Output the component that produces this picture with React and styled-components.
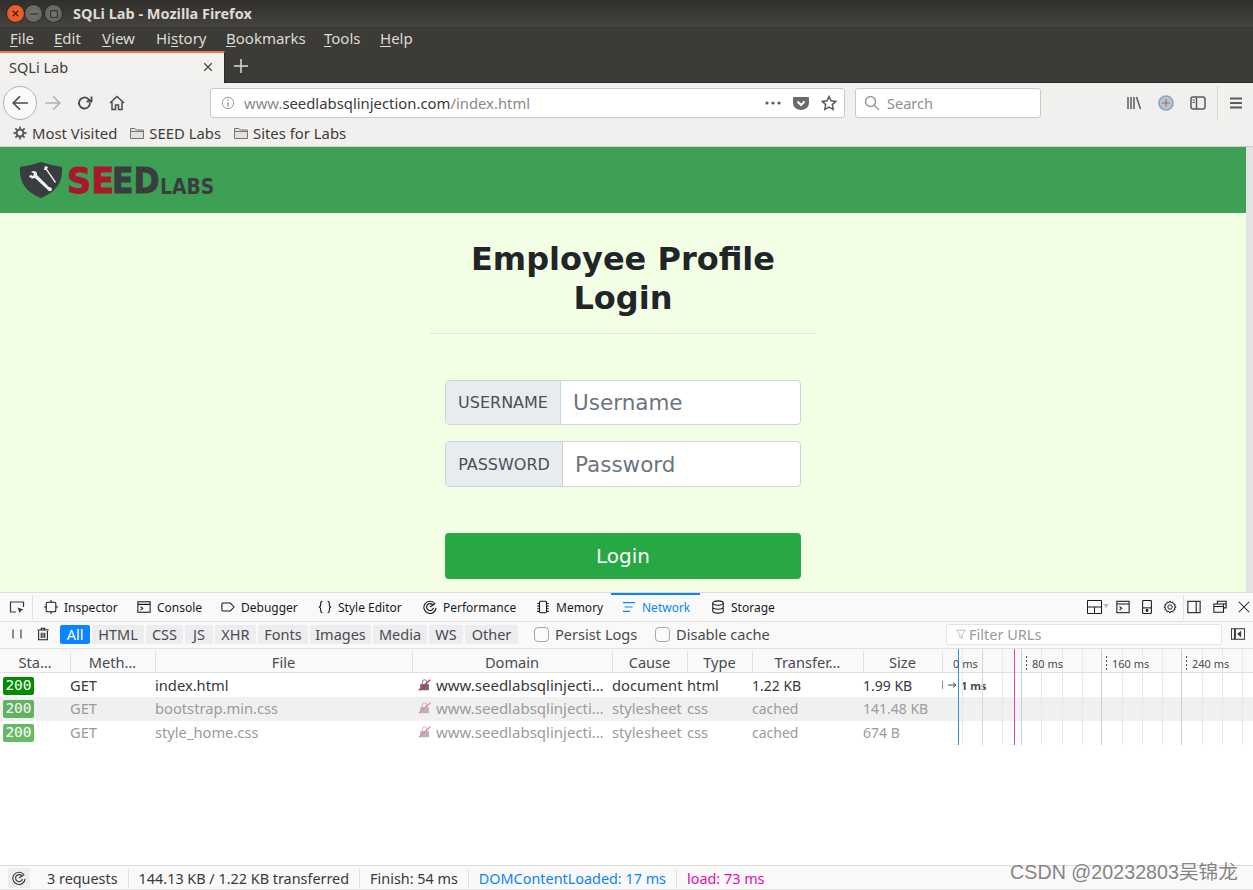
import React from 'react'
import styled, { createGlobalStyle } from 'styled-components'

const UI_FONT = '"Noto Sans", "Open Sans", sans-serif'

const GlobalStyle = createGlobalStyle`
  html, body { margin: 0; padding: 0; height: 100%; }
  body { width: 1253px; height: 890px; overflow: hidden; background: #fff; font-family: ${UI_FONT}; }
  * { box-sizing: border-box; }
`

const Window = styled.div`
  width: 1253px;
  height: 890px;
  display: flex;
  flex-direction: column;
  position: relative;
  overflow: hidden;
`

const TitleBar = styled.div`
  height: 27px;
  flex: none;
  display: flex;
  align-items: center;
  padding-left: 7px;
  background: linear-gradient(#2f2e2a, #45443f);
`
const WinDot = styled.span`
  width: 17px;
  height: 17px;
  border-radius: 50%;
  margin-right: ${(p) => p.$mr}px;
  display: flex;
  align-items: center;
  justify-content: center;
  color: ${(p) => (p.$close ? '#4a1d0d' : '#34332f')};
  background: ${(p) => (p.$close ? 'radial-gradient(#f0693a, #e5501f)' : 'radial-gradient(#77756f, #5f5d58)')};
  box-shadow: 0 0 0 1px rgba(0, 0, 0, 0.25);
`
const WinTitle = styled.div`
  margin: 0 0 1px 11px;
  font-size: 14.5px;
  font-weight: 700;
  color: #dfdbd2;
`

const MenuBar = styled.div`
  height: 24px;
  flex: none;
  display: flex;
  align-items: center;
  padding: 0 0 2px 10px;
  background: #3c3b37;
  color: #dfdbd2;
  font-size: 15px;
  u { text-underline-offset: 2px; }
`
const MenuItem = styled.span`
  width: ${(p) => p.$w}px;
  flex: none;
`

const TabStrip = styled.div`
  height: 32px;
  flex: none;
  display: flex;
  align-items: stretch;
  background: #3c3b37;
  border-bottom: 1px solid #2a2a27;
`
const ActiveTab = styled.div`
  width: 225px;
  display: flex;
  align-items: center;
  justify-content: space-between;
  padding: 0 10px 3px 9px;
  background: #f2f1ef;
  border-top: 2px solid #e8794c;
  border-right: 1px solid #2a2a27;
  margin-bottom: -1px;
  color: #3d3c38;
  font-size: 14.5px;
`
const NewTab = styled.div`
  width: 32px;
  padding-bottom: 2px;
  display: flex;
  align-items: center;
  justify-content: center;
  color: #dcdad5;
`

const NavBar = styled.div`
  height: 38px;
  flex: none;
  display: flex;
  align-items: center;
  padding: 1px 0 0 3px;
  background: #f2f0ee;
`
const BackButton = styled.div`
  width: 34px;
  height: 34px;
  flex: none;
  border-radius: 50%;
  border: 1px solid #b3b1ae;
  background: #fbfafa;
  display: flex;
  align-items: center;
  justify-content: center;
  color: #4a4a48;
`
const NavIcon = styled.div`
  width: 32px;
  flex: none;
  display: flex;
  justify-content: center;
  color: ${(p) => p.$color || '#4a4a48'};
`
const UrlBar = styled.div`
  width: 635px;
  height: 30px;
  margin-left: 77px;
  flex: none;
  display: flex;
  align-items: center;
  padding: 0 7px 0 10px;
  background: #fff;
  border: 1px solid #cbc9c6;
  border-radius: 3px;
  font-size: 14.85px;
  color: #8a8a88;
`
const UrlText = styled.div`
  flex: 1;
  margin-left: 9px;
  b { font-weight: 400; color: #3a3a38; }
`
const UrlActions = styled.div`
  display: flex;
  align-items: center;
  gap: 12px;
  color: #5c5c5a;
`
const SearchBox = styled.div`
  width: 186px;
  height: 30px;
  margin-left: 10px;
  flex: none;
  display: flex;
  align-items: center;
  gap: 7px;
  padding-left: 8px;
  background: #fff;
  border: 1px solid #cbc9c6;
  border-radius: 3px;
  font-size: 14.5px;
  color: #8f8f8d;
`
const SearchGlyph = styled.span`
  color: #9a9a98;
`
const NavRight = styled.div`
  margin-left: 77px;
  display: flex;
  align-items: center;
  color: #5a5a58;
`
const NavSlot = styled.div`
  width: 32px;
  display: flex;
  justify-content: center;
`
const NavDivider = styled.div`
  width: 1px;
  height: 34px;
  margin: 0 10px 0 3px;
  background: #dad8d5;
`

const BookmarksBar = styled.div`
  height: 26px;
  flex: none;
  display: flex;
  align-items: center;
  padding: 0 0 1px 13px;
  background: #f2f0ee;
  border-bottom: 1px solid #cfcdca;
  color: #3d3c38;
  font-size: 14.85px;
`
const Bookmark = styled.div`
  display: flex;
  align-items: center;
  gap: ${(p) => p.$gap || 4}px;
  margin-right: 12px;
`
const GearGlyph = styled.span`
  color: #5a5a58;
`

const Viewport = styled.div`
  height: 445px;
  flex: none;
  display: flex;
  background: #f3ffe4;
  overflow: hidden;
`
const Page = styled.main`
  flex: 1;
  display: flex;
  flex-direction: column;
  align-items: center;
  font-family: "DejaVu Sans", sans-serif;
`
const Scrollbar = styled.div`
  width: 7px;
  flex: none;
  background: #e3e3e3;
`
const Banner = styled.div`
  width: 100%;
  height: 66px;
  flex: none;
  display: flex;
  align-items: center;
  padding-left: 19px;
  background: #3ea055;
`
const LoginCard = styled.form`
  width: 386px;
  display: flex;
  flex-direction: column;
  align-items: center;
  padding-top: 27px;
`
const Heading = styled.h2`
  margin: 0;
  font-size: 32px;
  line-height: 39px;
  font-weight: 700;
  text-align: center;
  color: #212529;
`
const Rule = styled.hr`
  width: 100%;
  margin: 15px 0 46px;
  border: 0;
  border-top: 1px solid #dfe5d8;
`
const InputGroup = styled.div`
  width: 356px;
  height: ${(p) => p.$h}px;
  margin-bottom: ${(p) => p.$mb}px;
  display: flex;
  border: 1px solid #ced4da;
  border-radius: 4px;
  overflow: hidden;
  background: #fff;
`
const Addon = styled.span`
  width: ${(p) => p.$w}px;
  flex: none;
  display: flex;
  align-items: center;
  justify-content: center;
  background: #e9ecef;
  border-right: 1px solid #ced4da;
  color: #495057;
  font-size: 16px;
`
const Field = styled.div`
  flex: 1;
  display: flex;
  align-items: center;
  padding-left: 12px;
  color: #6c757d;
  font-size: 21.5px;
`
const LoginButton = styled.button`
  width: 356px;
  height: 46px;
  border: 0;
  border-radius: 4px;
  background: #28a745;
  color: #fff;
  font-family: inherit;
  font-size: 20px;
`

const DevTools = styled.section`
  flex: 1;
  min-height: 0;
  display: flex;
  flex-direction: column;
  position: relative;
  background: #fff;
  color: #38383d;
  font-size: 14px;
`
const ToolTabs = styled.div`
  height: 30px;
  flex: none;
  display: flex;
  align-items: stretch;
  background: #f9f9fa;
  border-top: 1px solid #dcdcdc;
  border-bottom: 1px solid #e0e0e1;
`
const PickerSlot = styled.div`
  width: 33px;
  flex: none;
  margin: 2px 0;
  display: flex;
  align-items: center;
  justify-content: center;
  padding-left: 1px;
  border-right: 1px solid #e0e0e1;
`
const ToolTab = styled.div`
  width: ${(p) => p.$w}px;
  flex: none;
  display: flex;
  align-items: center;
  gap: 6px;
  padding-left: ${(p) => p.$pl || 10}px;
  font-size: 12px;
  color: ${(p) => (p.$active ? '#0a84ff' : '#18191a')};
  box-shadow: ${(p) => (p.$active ? 'inset 0 2px 0 #0a84ff' : 'none')};
`
const ToolActions = styled.div`
  margin-left: auto;
  display: flex;
  align-items: center;
  color: #18191a;
`
const ToolAction = styled.div`
  width: ${(p) => p.$w}px;
  display: flex;
  justify-content: center;
`
const ToolDivider = styled.div`
  width: 1px;
  height: 24px;
  margin-right: -1px;
  background: #e0e0e1;
`

const FilterRow = styled.div`
  height: 27px;
  flex: none;
  display: flex;
  align-items: center;
  padding-bottom: 2px;
  background: #f9f9fa;
  border-bottom: 1px solid #e0e0e1;
`
const FilterIcons = styled.div`
  width: 60px;
  flex: none;
  display: flex;
  align-items: center;
  color: #18191a;
`
const FilterIcon = styled.div`
  width: ${(p) => p.$w}px;
  display: flex;
  justify-content: center;
`
const FilterChips = styled.div`
  display: flex;
  gap: 2px;
  margin-right: 16px;
`
const Chip = styled.div`
  width: ${(p) => p.$w}px;
  height: 19px;
  display: flex;
  align-items: center;
  justify-content: center;
  border-radius: 2px;
  font-size: 14.5px;
  background: ${(p) => (p.$on ? '#0a84ff' : '#ededf0')};
  color: ${(p) => (p.$on ? '#fff' : '#4a4a4f')};
`
const CheckLabel = styled.label`
  width: ${(p) => p.$w}px;
  flex: none;
  display: flex;
  align-items: center;
  gap: 6px;
  font-size: 14.6px;
  color: #4a4a4f;
`
const CheckBox = styled.span`
  width: 15px;
  height: 15px;
  flex: none;
  border: 1px solid #a8a8a8;
  border-radius: 4px;
  background: #fbfbfb;
`
const FilterInput = styled.div`
  width: 276px;
  height: 21px;
  margin-left: 150px;
  flex: none;
  display: flex;
  align-items: center;
  gap: 3px;
  padding-left: 9px;
  background: #fff;
  border: 1px solid #e3e3e4;
  border-radius: 2px;
  font-size: 14.5px;
  color: #9a9a9e;
`
const ToggleSlot = styled.div`
  flex: 1;
  display: flex;
  justify-content: center;
  color: #38383d;
`

const Table = styled.div`
  position: relative;
  flex: 1;
  min-height: 0;
`
const columns = '70px 85px 257px 200px 75px 65px 111px 79px 1fr'
const HeaderRow = styled.div`
  height: 24px;
  display: grid;
  grid-template-columns: ${columns};
  background: #f9f9fa;
  border-bottom: 1px solid #e0e0e1;
`
const HeaderCell = styled.div`
  display: flex;
  align-items: center;
  justify-content: center;
  margin: 3px -1px 2px 0;
  padding: 0 6px;
  font-size: 14.6px;
  color: #4a4a4f;
  white-space: nowrap;
  border-right: ${(p) => (p.$last ? '0' : '1px solid #e0e0e1')};
`
const Row = styled.div`
  height: 24px;
  display: grid;
  grid-template-columns: ${columns};
  align-items: center;
  padding-bottom: ${(p) => (p.$lift ? 2 : 0)}px;
  background: ${(p) => (p.$alt ? '#f0f0f0' : 'transparent')};
  color: ${(p) => (p.$cached ? '#9b9b9b' : '#38383d')};
  font-size: 14.7px;
  white-space: nowrap;
`
const StatusCell = styled.div`
  padding: ${(p) => (p.$lift ? '2px 0 0 3px' : '1px 0 0 3px')};
`
const StatusBadge = styled.span`
  display: block;
  width: 31px;
  height: 18px;
  border-radius: 2px;
  text-align: center;
  font-family: "DejaVu Sans Mono", monospace;
  font-size: 14.5px;
  line-height: 17px;
  color: #fff;
  background: #058b00;
  opacity: ${(p) => (p.$cached ? 0.6 : 1)};
`
const DomainCell = styled.div`
  display: flex;
  align-items: center;
  gap: 4px;
  padding-left: 6px;
  font-size: 15px;
  color: ${(p) => (p.$cached ? '#9b9b9b' : '#38383d')};
`
const NumberCell = styled.div`
  font-size: 14px;
`
const Timing = styled.div`
  display: flex;
  align-items: center;
  gap: 4px;
  font-size: 11px;
  font-weight: 700;
  color: #4a4a4f;
`
const WaterfallSvg = styled.svg`
  position: absolute;
  left: 942px;
  top: 0;
  pointer-events: none;
`
const TickRow = styled.div`
  position: absolute;
  left: 942px;
  top: 2px;
  height: 24px;
  display: flex;
  align-items: center;
  font-size: 11px;
  color: #4a4a4f;
`
const Tick = styled.span`
  width: ${(p) => p.$w}px;
  padding-left: ${(p) => p.$pl}px;
`

const StatusBar = styled.footer`
  height: 25px;
  flex: none;
  display: flex;
  align-items: center;
  padding: 1px 0 0 8px;
  background: #f9f9fa;
  border-top: 1px solid #dcdcdc;
  border-bottom: 1px solid #e6e6e6;
  font-size: 14.4px;
  color: #38383d;
`
const PerfButton = styled.div`
  width: 22px;
  height: 20px;
  margin-right: 17px;
  display: flex;
  align-items: center;
  justify-content: center;
  border-radius: 2px;
  background: #ededf0;
`
const StatusItem = styled.div`
  padding-right: 10px;
  margin-right: 10px;
  border-right: ${(p) => (p.$last ? '0' : '1px solid #e0e0e1')};
  color: ${(p) => p.$color || 'inherit'};
`
const Watermark = styled.div`
  position: absolute;
  right: 15px;
  bottom: 5px;
  font-family: "Liberation Sans", "Noto Sans CJK SC", sans-serif;
  font-size: 19.7px;
  color: #858585;
  text-shadow: 1px 1px 1px rgba(255, 255, 255, 0.9);
`

const Icon = ({ size = 16, children, sw = 1.5 }) => (
  <svg width={size} height={size} viewBox="0 0 16 16" fill="none" stroke="currentColor" strokeWidth={sw} style={{ display: 'block', flex: 'none' }}>
    {children}
  </svg>
)

const Folder = () => (
  <Icon size={16} sw={1}>
    <path d="M1.5 13.5V3.5h4.5l1.5 1.5h7v8.5z" fill="#e3e1dc" stroke="#77756f" />
    <path d="M1.5 6.5h13" stroke="#77756f" />
  </Icon>
)

const LockOff = ({ cached }) => (
  <Icon size={14} sw={1}>
    <path d="M2.5 7h10v7h-10z" fill={cached ? '#b5b5b5' : '#6b6b6b'} stroke="none" />
    <path d="M5 7V4.5a2.5 2.5 0 0 1 5 0V7" stroke={cached ? '#b5b5b5' : '#6b6b6b'} />
    <path d="M1 14L14 2" stroke={cached ? '#ee8a9c' : '#e22850'} strokeWidth="1.6" />
  </Icon>
)

const PerfGlyph = () => (
  <Icon size={14} sw={1.3}>
    <path d="M13.5 4A7 7 0 1 0 15 9" />
    <path d="M11.5 6A4 4 0 1 0 12 9" />
    <path d="M8 8l6-4" />
  </Icon>
)

const rows = [
  { file: 'index.html', cause: 'document', type: 'html', transfer: '1.22 KB', size: '1.99 KB' },
  { file: 'bootstrap.min.css', cause: 'stylesheet', type: 'css', transfer: 'cached', size: '141.48 KB', cached: true, alt: true, lift: true },
  { file: 'style_home.css', cause: 'stylesheet', type: 'css', transfer: 'cached', size: '674 B', cached: true, lift: true },
]

const lightLines = [20, 60, 99, 120, 140, 180, 200, 220, 260, 280, 300]
const midLines = [40]
const darkLines = [79, 159, 239]

const Waterfall = () => (
  <WaterfallSvg width="311" height="96">
    {lightLines.map((x) => <line key={x} x1={x + 0.5} x2={x + 0.5} y1="0" y2="96" stroke="#e8e8e8" />)}
    {midLines.map((x) => <line key={x} x1={x + 0.5} x2={x + 0.5} y1="0" y2="96" stroke="#d8d8d8" />)}
    {darkLines.map((x) => <line key={x} x1={x + 0.5} x2={x + 0.5} y1="0" y2="96" stroke="#cdcdcd" />)}
    <line x1="16.5" x2="16.5" y1="0" y2="96" stroke="#2f8df5" />
    <line x1="72.5" x2="72.5" y1="0" y2="96" stroke="#e23cc0" />
    {[84, 164, 244].map((x) => <line key={x} x1={x + 0.5} x2={x + 0.5} y1="7" y2="22" stroke="#555" strokeDasharray="2 2" />)}
  </WaterfallSvg>
)

const logoFont = '"DejaVu Sans", sans-serif'

const Logo = () => (
  <svg width="200" height="60" viewBox="0 -11 200 60" style={{ display: 'block' }}>
    <path d="M1 6C8 5 15 3 22 1c7 2 14 4 21 5 1 14-5 25-21 31C6 31 0 20 1 6z" fill="#3a3d3f" />
    <path d="M26 5l3 1-1 2 9 13-1 1-9-13-2 0z" fill="#f2f2f2" />
    <path d="M12 11c2-2 5-1 6 1l0 2 12 12c2 0 3 1 3 3-1 1-3 2-4 0L16 17c-3 1-5 0-6-2l2-1 2 1 1-2-1-1z" fill="#f2f2f2" />
    <text transform="translate(48 32) scale(1.12 1.2)" fontFamily={logoFont} fontWeight="700" fontSize="30" fill="#a8172c" stroke="#a8172c" strokeWidth="0.8">SE</text>
    <text transform="translate(93 32) scale(1.05 1.2)" fontFamily={logoFont} fontWeight="700" fontSize="30" fill="#3a3d3f" stroke="#3a3d3f" strokeWidth="0.8">ED</text>
    <text transform="translate(141 33) scale(1.04 1.17)" fontFamily={logoFont} fontWeight="700" fontSize="18" fill="#3a3d3f">LABS</text>
  </svg>
)

const menuItems = [
  { w: 44, before: '', key: 'F', after: 'ile' },
  { w: 48, before: '', key: 'E', after: 'dit' },
  { w: 54, before: '', key: 'V', after: 'iew' },
  { w: 70, before: 'Hi', key: 's', after: 'tory' },
  { w: 98, before: '', key: 'B', after: 'ookmarks' },
  { w: 56, before: '', key: 'T', after: 'ools' },
  { w: 50, before: '', key: 'H', after: 'elp' },
]

const chips = [['All', 30], ['HTML', 52], ['CSS', 37], ['JS', 28], ['XHR', 41], ['Fonts', 50], ['Images', 61], ['Media', 54], ['WS', 34], ['Other', 53]]

export default function App() {
  return (
    <Window>
      <GlobalStyle />
      <TitleBar>
        <WinDot $close $mr={1}>
          <Icon size={9} sw={2.4}><path d="M3 3l10 10M13 3L3 13" /></Icon>
        </WinDot>
        <WinDot $mr={3}>
          <Icon size={10} sw={2.2}><path d="M2 8h12" /></Icon>
        </WinDot>
        <WinDot $mr={0}>
          <Icon size={10} sw={1.8}><rect x="2.5" y="2.5" width="11" height="11" rx="1.5" /></Icon>
        </WinDot>
        <WinTitle>SQLi Lab - Mozilla Firefox</WinTitle>
      </TitleBar>
      <MenuBar>
        {menuItems.map((m) => (
          <MenuItem key={m.after} $w={m.w}>{m.before}<u>{m.key}</u>{m.after}</MenuItem>
        ))}
      </MenuBar>
      <TabStrip>
        <ActiveTab>
          SQLi Lab
          <Icon size={12}><path d="M3 3l10 10M13 3L3 13" /></Icon>
        </ActiveTab>
        <NewTab>
          <Icon size={16}><path d="M8 1v14M1 8h14" /></Icon>
        </NewTab>
      </TabStrip>
      <NavBar>
        <BackButton>
          <Icon size={18}><path d="M15 8H2M8 2L2 8l6 6" /></Icon>
        </BackButton>
        <NavIcon $color="#b5b4b2">
          <Icon size={18}><path d="M1 8h13M8 2l6 6-6 6" /></Icon>
        </NavIcon>
        <NavIcon>
          <Icon size={16} sw={1.8}><path d="M13 8a5.5 5.5 0 1 1-1.6-3.9L14 6.5M14.5 1.5v5h-5" /></Icon>
        </NavIcon>
        <NavIcon>
          <Icon size={16} sw={1.5}><path d="M1 8l7-6.5L15 8M3 7v7.5h3.5V10h3v4.5H13V7" /></Icon>
        </NavIcon>
        <UrlBar>
          <Icon size={14} sw={1}>
            <circle cx="8" cy="8" r="6.5" />
            <path d="M8 7v5M8 4v1.5" strokeWidth="1.5" />
          </Icon>
          <UrlText>www.<b>seedlabsqlinjection.com</b>/index.html</UrlText>
          <UrlActions>
            <svg width="16" height="4" viewBox="0 0 16 4" style={{ display: 'block' }}>
              <circle cx="2" cy="2" r="1.6" fill="currentColor" />
              <circle cx="8" cy="2" r="1.6" fill="currentColor" />
              <circle cx="14" cy="2" r="1.6" fill="currentColor" />
            </svg>
            <svg width="16" height="16" viewBox="0 0 16 16" style={{ display: 'block' }}>
              <path d="M1 2h14a1 1 0 0 1 1 1v5a8 7 0 0 1-16 0V3a1 1 0 0 1 1-1z" fill="#6a6a68" />
              <path d="M4.5 6.5L8 10l3.5-3.5" stroke="#fff" strokeWidth="2" fill="none" />
            </svg>
            <Icon size={16}><path d="M8 1.5l2 4.3 4.7.6-3.4 3.2.9 4.7L8 12l-4.2 2.3.9-4.7L1.3 6.4l4.7-.6z" /></Icon>
          </UrlActions>
        </UrlBar>
        <SearchBox>
          <SearchGlyph>
            <Icon size={16}><circle cx="6.5" cy="6.5" r="5" /><path d="M10 10l5 5" /></Icon>
          </SearchGlyph>
          Search
        </SearchBox>
        <NavRight>
          <NavSlot>
            <Icon size={16}><path d="M2 2v12M5 2v12M8 2v12M10.5 2l4 12" /></Icon>
          </NavSlot>
          <NavSlot>
            <svg width="16" height="16" viewBox="0 0 16 16" style={{ display: 'block' }}>
              <circle cx="8" cy="8" r="7" fill="#c4c2bf" stroke="#7ba3e0" strokeWidth="1.6" />
              <path d="M8 4v8M4 8h8" stroke="#777" />
            </svg>
          </NavSlot>
          <NavSlot>
            <Icon size={16}>
              <rect x="1" y="2" width="14" height="12" rx="2" />
              <path d="M6.5 2v12" />
              <path d="M2.5 5h2.5M2.5 7.5h2.5" strokeWidth="1" />
            </Icon>
          </NavSlot>
          <NavDivider />
          <Icon size={16} sw={2}><path d="M2 3.5h12M2 8h12M2 12.5h12" /></Icon>
        </NavRight>
      </NavBar>
      <BookmarksBar>
        <Bookmark $gap={5}>
          <GearGlyph>
            <Icon size={14} sw={2.5}>
              <circle cx="8" cy="8" r="4" />
              <path d="M8 0.5v3M8 12.5v3M0.5 8h3M12.5 8h3M2.7 2.7l2.1 2.1M11.2 11.2l2.1 2.1M2.7 13.3l2.1-2.1M11.2 4.8l2.1-2.1" strokeWidth="2" />
            </Icon>
          </GearGlyph>
          Most Visited
        </Bookmark>
        <Bookmark><Folder />SEED Labs</Bookmark>
        <Bookmark><Folder />Sites for Labs</Bookmark>
      </BookmarksBar>

      <Viewport>
        <Page>
          <Banner><Logo /></Banner>
          <LoginCard>
            <Heading>Employee Profile<br />Login</Heading>
            <Rule />
            <InputGroup $h={45} $mb={16}>
              <Addon $w={115}>USERNAME</Addon>
              <Field>Username</Field>
            </InputGroup>
            <InputGroup $h={46} $mb={46}>
              <Addon $w={117}>PASSWORD</Addon>
              <Field>Password</Field>
            </InputGroup>
            <LoginButton type="button">Login</LoginButton>
          </LoginCard>
        </Page>
        <Scrollbar />
      </Viewport>

      <DevTools>
        <ToolTabs>
          <PickerSlot>
            <Icon size={16} sw={1.2}>
              <path d="M7 13H1.5V3h13v5" />
              <path d="M8.5 8.5l6 2-2.5 1.2-1.2 2.5z" fill="currentColor" stroke="none" />
            </Icon>
          </PickerSlot>
          <ToolTab $w={94} $pl={11}>
            <Icon size={14} sw={1.2}><rect x="2.5" y="2.5" width="11" height="11" rx="1.5" /><path d="M8 0v2.5M8 13.5V16M0 8h2.5M13.5 8H16" /></Icon>
            Inspector
          </ToolTab>
          <ToolTab $w={84}>
            <Icon size={14} sw={1.2}><rect x="1" y="2" width="14" height="12" /><path d="M1 5h14M4 7.5l2.5 2L4 11.5" /></Icon>
            Console
          </ToolTab>
          <ToolTab $w={97}>
            <Icon size={14} sw={1.2}><path d="M2 3.5h8.5L15 8l-4.5 4.5H2a1 1 0 0 1-1-1v-7a1 1 0 0 1 1-1z" /></Icon>
            Debugger
          </ToolTab>
          <ToolTab $w={105}>
            <Icon size={14} sw={1.2}><path d="M5 1.5C3 1.5 3 3 3 5s-1 3-2 3c1 0 2 1 2 3s0 3.5 2 3.5M11 1.5c2 0 2 1.5 2 3.5s1 3 2 3c-1 0-2 1-2 3s0 3.5-2 3.5" /></Icon>
            Style Editor
          </ToolTab>
          <ToolTab $w={113}>
            <PerfGlyph />
            Performance
          </ToolTab>
          <ToolTab $w={85}>
            <Icon size={14} sw={1.2}><rect x="4" y="1.5" width="8" height="13" rx="1" /><path d="M4 4H1.5M4 7H1.5M4 10H1.5M4 13H1.5M12 4h2.5M12 7h2.5M12 10h2.5M12 13h2.5" /></Icon>
            Memory
          </ToolTab>
          <ToolTab $w={89} $pl={11} $active>
            <Icon size={14} sw={1.2}><path d="M1 3h14M3 8h9M1 13h8" /></Icon>
            Network
          </ToolTab>
          <ToolTab $w={90} $pl={11}>
            <Icon size={14} sw={1.2}><ellipse cx="8" cy="3.5" rx="6" ry="2.5" /><path d="M2 3.5v9c0 1.4 2.7 2.5 6 2.5s6-1.1 6-2.5v-9M2 8c0 1.4 2.7 2.5 6 2.5S14 9.4 14 8" /></Icon>
            Storage
          </ToolTab>
          <ToolActions>
            <ToolAction $w={22}>
              <svg width="22" height="14" viewBox="0 0 22 14" fill="none" stroke="currentColor" style={{ display: 'block' }}>
                <path d="M.5.5h14v13H.5zM.5 7h14M7.5 7v6.5" />
                <path d="M16 4h6l-3 4z" fill="#bdbdbd" stroke="none" />
              </svg>
            </ToolAction>
            <ToolAction $w={28}>
              <Icon size={14} sw={1.2}><rect x="1" y="1.5" width="14" height="13" /><path d="M1 4.5h14M4 7.5l2.5 2L4 11.5" /></Icon>
            </ToolAction>
            <ToolAction $w={20}>
              <Icon size={14} sw={1.2}><rect x="3" y=".5" width="10" height="15" rx="1" /><path d="M3 9h10" /><circle cx="8" cy="12" r="1" fill="currentColor" /></Icon>
            </ToolAction>
            <ToolAction $w={26}>
              <Icon size={14} sw={1.1}><circle cx="8" cy="8" r="2.5" /><path d="M8 1l1 2 2.2-.8.5 2.3 2.3.5L13 7l2 1-2 1 .9 2-2.3.5-.4 2.3L9 13l-1 2-1-2-2.2.8-.5-2.3-2.3-.5L3 9 1 8l2-1-.9-2 2.3-.5.5-2.3L7 3z" /></Icon>
            </ToolAction>
            <ToolDivider />
            <ToolAction $w={22}>
              <Icon size={14} sw={1.2}><rect x="1" y="1.5" width="14" height="13" /><path d="M10.5 1.5v13" /></Icon>
            </ToolAction>
            <ToolAction $w={30}>
              <Icon size={14} sw={1.2}><path d="M5 4V1.5h10V9h-3M1 4.5h11V14H1zM1 7.5h11M5 4.5h10" /></Icon>
            </ToolAction>
            <ToolAction $w={18}>
              <Icon size={14} sw={1.2}><path d="M2 2l12 12M14 2L2 14" /></Icon>
            </ToolAction>
          </ToolActions>
        </ToolTabs>

        <FilterRow>
          <FilterIcons>
            <FilterIcon $w={34}>
              <Icon size={12} sw={1.3}><path d="M2.7 2v12M13.3 2v12" /></Icon>
            </FilterIcon>
            <FilterIcon $w={18}>
              <Icon size={14} sw={1.2}><path d="M3 4.5v10h10v-10M1.5 3.5h13M6 3V1.5h4V3M6 6.5v6M8 6.5v6M10 6.5v6" /></Icon>
            </FilterIcon>
          </FilterIcons>
          <FilterChips>
            {chips.map(([label, w]) => (
              <Chip key={label} $w={w} $on={label === 'All'}>{label}</Chip>
            ))}
          </FilterChips>
          <CheckLabel $w={121}><CheckBox />Persist Logs</CheckLabel>
          <CheckLabel $w={141}><CheckBox />Disable cache</CheckLabel>
          <FilterInput>
            <Icon size={10} sw={1}><path d="M1 2h14L10 8.5V15L6 13V8.5z" /></Icon>
            Filter URLs
          </FilterInput>
          <ToggleSlot>
            <Icon size={14} sw={1.2}><rect x=".5" y="2" width="15" height="12" /><path d="M4 2v12M5 2v12" /><path d="M11 5.5v5L8 8z" fill="currentColor" /></Icon>
          </ToggleSlot>
        </FilterRow>

        <Table>
          <HeaderRow>
            <HeaderCell>Sta…</HeaderCell>
            <HeaderCell>Meth…</HeaderCell>
            <HeaderCell>File</HeaderCell>
            <HeaderCell>Domain</HeaderCell>
            <HeaderCell>Cause</HeaderCell>
            <HeaderCell>Type</HeaderCell>
            <HeaderCell>Transfer…</HeaderCell>
            <HeaderCell>Size</HeaderCell>
            <HeaderCell $last />
          </HeaderRow>
          {rows.map((r) => (
            <Row key={r.file} $alt={r.alt} $cached={r.cached} $lift={r.lift}>
              <StatusCell $lift={r.lift}><StatusBadge $cached={r.cached}>200</StatusBadge></StatusCell>
              <div>GET</div>
              <div>{r.file}</div>
              <DomainCell $cached={r.cached}><LockOff cached={r.cached} />www.seedlabsqlinjecti…</DomainCell>
              <div>{r.cause}</div>
              <div>{r.type}</div>
              <NumberCell>{r.transfer}</NumberCell>
              <NumberCell>{r.size}</NumberCell>
              {r.cached ? <div /> : (
                <Timing>
                  <svg width="15" height="10" viewBox="0 0 15 10" fill="none" style={{ display: 'block' }}>
                    <path d="M.5 1v8" stroke="#6d8fb5" />
                    <path d="M6 5h8M11 2.5L14 5l-3 2.5" stroke="#4a4a4f" />
                  </svg>
                  1 ms
                </Timing>
              )}
            </Row>
          ))}
          <Waterfall />
          <TickRow>
            <Tick $w={84} $pl={11}>0 ms</Tick>
            <Tick $w={80} $pl={6}>80 ms</Tick>
            <Tick $w={80} $pl={6}>160 ms</Tick>
            <Tick $w={60} $pl={6}>240 ms</Tick>
          </TickRow>
        </Table>

        <StatusBar>
          <PerfButton><PerfGlyph /></PerfButton>
          <StatusItem>3 requests</StatusItem>
          <StatusItem>144.13 KB / 1.22 KB transferred</StatusItem>
          <StatusItem>Finish: 54 ms</StatusItem>
          <StatusItem $color="#0a84ff">DOMContentLoaded: 17 ms</StatusItem>
          <StatusItem $color="#e10db0" $last>load: 73 ms</StatusItem>
        </StatusBar>
        <Watermark>CSDN @20232803吴锦龙</Watermark>
      </DevTools>
    </Window>
  )
}
